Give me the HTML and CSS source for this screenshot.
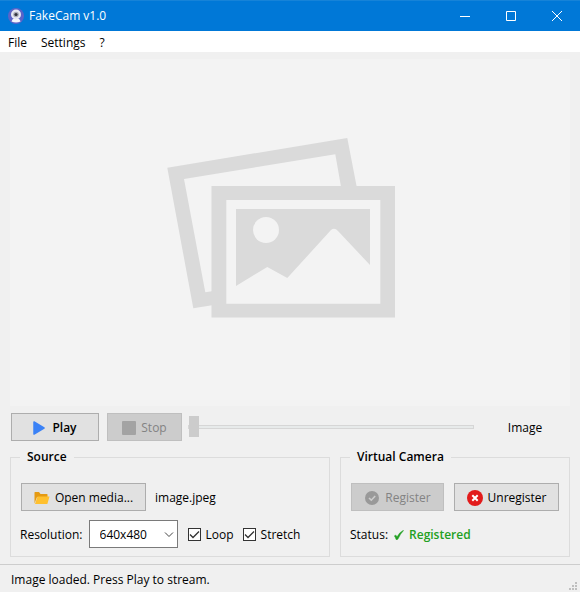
FILE: index.html
```html
<!DOCTYPE html>
<html lang="en">
<head>
    <meta charset="UTF-8">
    <meta name="viewport" content="width=device-width, initial-scale=1.0">
    <title>FakeCam v1.0</title>
    <link rel="stylesheet" href="styles.css">
</head>
<body>

    <!-- Title bar -->
    <header class="titlebar">
        <svg class="app-icon" width="16" height="16" viewBox="0 0 16 16">
            <circle cx="8" cy="8" r="8" fill="#5b63c8"/>
            <path d="M3.500 13.500Q4 11 6 10.500H10Q12 11 12.500 13.500Q8 15.500 3.500 13.500Z" fill="#f4f4fb"/>
            <circle cx="8" cy="6.500" r="5" fill="#e6e7f3"/>
            <circle cx="8" cy="6.500" r="2.800" fill="#a9abb8"/>
            <circle cx="8" cy="6.500" r="1.600" fill="#33343f"/>
        </svg>
        <h1>FakeCam v1.0</h1>
        <div class="window-buttons">
            <button type="button" aria-label="Minimize">
                <svg width="10" height="10" viewBox="0 0 10 10"><path d="M0 5.500H10"/></svg>
            </button>
            <button type="button" aria-label="Maximize">
                <svg width="10" height="10" viewBox="0 0 10 10"><path d="M.5.500H9.500V9.500H.5Z"/></svg>
            </button>
            <button type="button" aria-label="Close">
                <svg width="10" height="10" viewBox="0 0 10 10"><path d="M0 0L10 10M10 0L0 10"/></svg>
            </button>
        </div>
    </header>

    <!-- Menu -->
    <nav class="menubar">
        <button type="button">File</button>
        <button type="button">Settings</button>
        <button type="button">?</button>
    </nav>

    <main>
        <div class="preview">
            <svg viewBox="0 0 560 347" role="img" aria-label="Preview">
                <g fill="#dadada" fill-rule="evenodd">
                    <path d="M157.300 108.700L337.300 79L346.700 127.700H331L325.300 95.300L174 120L195.300 233.300L202 232.300V246.300L183.300 249.300Z"/>
                    <path d="M201.500 127H385V258.500H201.500ZM216.300 141V244.700H370.300V141Z"/>
                    <path d="M226 150H360V206L328 172Q324.500 168 321 171L277.300 219L257.300 208L226 227Z"/>
                </g>
                <circle cx="256" cy="171" r="13" fill="#f3f3f3"/>
            </svg>
        </div>

        <!-- Playback -->
        <div class="playback">
            <button type="button" class="btn btn-play">
                <svg width="12" height="14" viewBox="0 0 12 14"><path d="M1 1L11 7L1 13Z" fill="#3b82f6" stroke="#3b82f6" stroke-width="1.500" stroke-linejoin="round"/></svg>
                Play
            </button>
            <button type="button" class="btn btn-stop" disabled>
                <svg width="14" height="14" viewBox="0 0 14 14"><rect width="14" height="14" rx="1" fill="#a3a3a3"/></svg>
                Stop
            </button>
            <input type="range" class="seek" min="0" max="100" value="0" disabled aria-label="Position">
            <span class="media-type">Image</span>
        </div>

        <div class="groups">
            <fieldset>
                <legend>Source</legend>
                <div class="row">
                    <button type="button" class="btn btn-open">
                        <svg width="16" height="14" viewBox="0 0 16 14">
                            <path d="M.5 1.500Q.5 1 1 1H5L6.500 3H13Q13.500 3 13.500 3.500V6H3L.5 12.500Z" fill="#e59a12"/>
                            <path d="M3.500 5.500H15.500L13.500 12.500Q13.400 13 12.800 13H1Z" fill="#ffc02e"/>
                        </svg>
                        Open media...
                    </button>
                    <span class="file-name">image.jpeg</span>
                </div>
                <div class="row">
                    <label class="field-label" for="resolution">Resolution:</label>
                    <span class="select">
                        <select id="resolution">
                            <option>640x480</option>
                        </select>
                        <svg width="10" height="6" viewBox="0 0 10 6"><path d="M1 .5L5 4.500L9 .5" fill="none" stroke="#444"/></svg>
                    </span>
                    <input type="checkbox" id="loop" checked>
                    <label for="loop">Loop</label>
                    <input type="checkbox" id="stretch" checked>
                    <label for="stretch">Stretch</label>
                </div>
            </fieldset>

            <fieldset>
                <legend>Virtual Camera</legend>
                <div class="row">
                    <button type="button" class="btn btn-register" disabled>
                        <svg width="16" height="16" viewBox="0 0 16 16">
                            <circle cx="8" cy="8" r="7" fill="#999"/>
                            <path d="M5 8L7.300 10.200L11.200 6" fill="none" stroke="#ccc" stroke-width="1.600"/>
                        </svg>
                        Register
                    </button>
                    <button type="button" class="btn btn-unregister">
                        <svg width="16" height="16" viewBox="0 0 16 16">
                            <circle cx="8" cy="8" r="8" fill="#e21b1b"/>
                            <path d="M5.300 5.300L10.700 10.700M10.700 5.300L5.300 10.700" stroke="#fff" stroke-width="2"/>
                        </svg>
                        Unregister
                    </button>
                </div>
                <div class="row">
                    <span class="field-label">Status:</span>
                    <strong class="status">
                        <svg width="10" height="10" viewBox="0 0 10 10"><path d="M.3 6Q1 4.900 1.900 5.200Q2.700 5.700 3 6.800Q5.500 2.200 9.300.2L9.600.6Q6.200 3.900 4 9.100Q3 10.100 2 9.400Q1.500 7.200.3 6Z" fill="#22a022" stroke="#22a022" stroke-width=".4"/></svg>
                        Registered
                    </strong>
                </div>
            </fieldset>
        </div>
    </main>

    <footer class="statusbar">
        <span>Image loaded. Press Play to stream.</span>
        <svg width="8" height="8" viewBox="0 0 8 8">
            <path d="M6 0H8V2H6ZM3 3H5V5H3ZM6 3H8V5H6ZM0 6H2V8H0ZM3 6H5V8H3ZM6 6H8V8H6Z" fill="#bfbfbf"/>
        </svg>
    </footer>

</body>
</html>
```
FILE: styles.css
```css
* {
    box-sizing: border-box;
}

body {
    margin: 0;
    min-height: 100vh;
    display: flex;
    flex-direction: column;
    background-color: #f0f0f0;
    color: #000;
    font: 12px/16px "Open Sans", "Noto Sans", sans-serif;
}

button,
select {
    font: inherit;
    color: inherit;
}

/* Title bar */
.titlebar {
    display: flex;
    align-items: center;
    height: 31px;
    padding-left: 8px;
    gap: 5px;
    background-color: #0078d7;
    border-top: 1px solid #1683d8;
    color: #fff;
}

.titlebar h1 {
    flex: 1;
    margin: 0;
    font-size: 12px;
    font-weight: normal;
}

.window-buttons {
    display: flex;
    align-self: stretch;
}

.window-buttons button {
    display: flex;
    align-items: center;
    justify-content: center;
    width: 46px;
    padding: 0;
    border: none;
    background: none;
}

.window-buttons path {
    fill: none;
    stroke: #fff;
}

/* Menu */
.menubar {
    display: flex;
    height: 21px;
    padding: 0 1px;
    background-color: #fff;
}

.menubar button {
    padding: 2px 7px 0;
    border: none;
    background: none;
}

/* Main content */
main {
    flex: 1;
    display: flex;
    flex-direction: column;
    padding: 7px 10px;
}

.preview {
    flex: 1;
    min-height: 200px;
    display: flex;
    background-color: #f3f3f3;
}

.preview svg {
    width: 100%;
}

.btn {
    display: flex;
    align-items: center;
    justify-content: center;
    gap: 5px;
    height: 28px;
    padding: 1px 0 0;
    border: 1px solid #adadad;
    background-color: #e1e1e1;
    white-space: nowrap;
}

.btn:disabled {
    border-color: #bfbfbf;
    background-color: #ccc;
    color: #838383;
}

/* Playback */
.playback {
    display: flex;
    align-items: center;
    padding: 7px 0 8px 1px;
    gap: 8px;
}

.btn-play {
    width: 88px;
    gap: 7px;
    font-weight: 600;
}

.btn-stop {
    width: 75px;
}

.seek {
    flex: 1;
    min-width: 0;
    height: 21px;
    margin: 0 -2px;
    appearance: none;
    background: none;
}

.seek::-webkit-slider-runnable-track {
    height: 4px;
    border: 1px solid #d6d6d6;
    background-color: #e7eaea;
}

.seek::-webkit-slider-thumb {
    appearance: none;
    width: 10px;
    height: 21px;
    margin-top: -10px;
    background-color: #ccc;
}

.media-type {
    width: 90px;
    padding-top: 1px;
    text-align: center;
}

/* Groups */
.groups {
    display: grid;
    grid-template-columns: 32fr 23fr;
    gap: 10px;
}

fieldset {
    min-width: 0;
    margin: 0;
    padding: 18px 10px 8px;
    border: 1px solid #dcdcdc;
}

legend {
    padding: 0 7px;
    margin-left: -1px;
    font-weight: 600;
}

.row {
    display: flex;
    align-items: center;
    height: 28px;
}

.row + .row {
    margin-top: 9px;
}

.row > label,
.row > span {
    padding-top: 1px;
}

.field-label {
    margin-left: -1px;
}

.btn-open {
    width: 125px;
}

.file-name {
    margin-left: 9px;
}

.row > .select {
    position: relative;
    width: 89px;
    height: 28px;
    margin: 0 10px 0 6px;
    padding: 0;
}

.select select {
    width: 100%;
    height: 100%;
    padding: 1px 10px 0;
    border: 1px solid #7a7a7a;
    border-radius: 0;
    appearance: none;
    background-color: #fff;
}

.select svg {
    position: absolute;
    top: 12px;
    right: 4px;
    pointer-events: none;
}

input[type="checkbox"] {
    width: 13px;
    height: 13px;
    margin: 0 5px 0 0;
    border: 1px solid #333;
    appearance: none;
    background-color: #fff;
}

input[type="checkbox"]:checked {
    background-image: url("data:image/svg+xml,%3Csvg xmlns='http://www.w3.org/2000/svg' viewBox='0 0 11 11'%3E%3Cpath d='M1 5.500L4 8.500L10 2.500' fill='none' stroke='%23333' stroke-width='1.300'/%3E%3C/svg%3E");
}

label + input[type="checkbox"] {
    margin-left: 9px;
}

.btn-register {
    width: 93px;
}

.btn-unregister {
    width: 105px;
    margin-left: 10px;
}

.status {
    display: flex;
    align-items: center;
    gap: 5px;
    margin-left: 6px;
    padding-top: 1px;
    color: #22a022;
    font-weight: 600;
}

/* Status bar */
.statusbar {
    display: flex;
    justify-content: space-between;
    align-items: center;
    height: 28px;
    padding: 3px 3px 0 11px;
    border-top: 1px solid #cdcdcd;
}

.statusbar svg {
    align-self: flex-end;
    margin-bottom: 2px;
}
```
